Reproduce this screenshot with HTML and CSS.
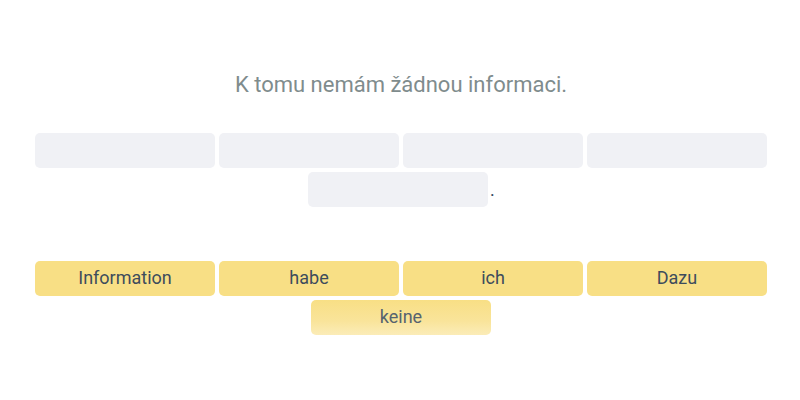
FILE: index.html
```html
<!DOCTYPE html>
<html>
<head>
<meta charset="utf-8">
<link rel="stylesheet" href="styles.css">
</head>
<body>
<div class="page">
  <p class="prompt">K tomu nemám žádnou informaci.</p>
  <div class="answer">
    <div class="row">
      <span class="slot"></span><span class="slot"></span><span class="slot"></span><span class="slot"></span>
    </div>
    <div class="row tail">
      <span class="slot"></span><span class="dot">.</span>
    </div>
  </div>
  <div class="bank">
    <div class="row">
      <span class="word">Information</span><span class="word">habe</span><span class="word">ich</span><span class="word">Dazu</span>
    </div>
    <div class="row">
      <span class="word fading">keine</span>
    </div>
  </div>
</div>
</body>
</html>
```
FILE: styles.css
```css
html, body {
  margin: 0;
  padding: 0;
  background: #ffffff;
}
body {
  font-family: Roboto, "Liberation Sans", sans-serif;
}
.page {
  width: 732px;
  margin-left: 35px;
  padding-top: 71px;
}
.prompt {
  margin: 0;
  text-align: center;
  font-size: 22px;
  line-height: 28px;
  color: #7f8c8d;
  height: 28px;
}
.answer {
  margin-top: 34px;
  display: flex;
  flex-direction: column;
  gap: 4px;
}
.row {
  display: flex;
  justify-content: center;
  align-items: center;
  gap: 4px;
}
.slot {
  width: 180px;
  height: 35px;
  background: #f0f1f5;
  border-radius: 5px;
}
.row.tail {
  gap: 0;
}
.dot {
  width: 6px;
  font-size: 18px;
  line-height: 35px;
  color: #34495e;
  padding-left: 2px;
  box-sizing: border-box;
}
.bank {
  margin-top: 54px;
  display: flex;
  flex-direction: column;
  gap: 4px;
}
.word {
  width: 180px;
  height: 35px;
  background: #f8df85;
  border-radius: 5px;
  text-align: center;
  font-size: 18px;
  line-height: 34px;
  color: #3d4c5c;
}
.word.fading {
  background: linear-gradient(to bottom, #f8df85 0%, #f9e49a 60%, #fbecb8 100%);
  color: #56636f;
}
```
